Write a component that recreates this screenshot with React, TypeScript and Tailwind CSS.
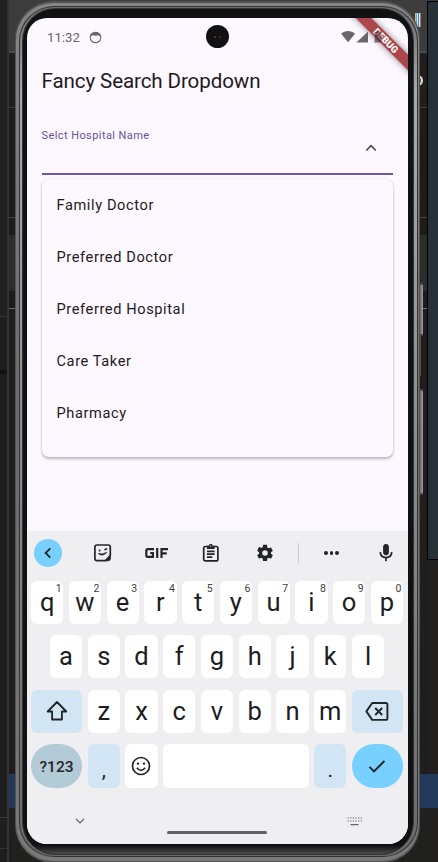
import React from "react";

const options = ["Family Doctor", "Preferred Doctor", "Preferred Hospital", "Care Taker", "Pharmacy"];
const topRow = "qwertyuiop".split("");
const homeRow = "asdfghjkl".split("");
const bottomRow = "zxcvbnm".split("");

function Key({ letter, hint }: { letter: string; hint?: string }) {
  return (
    <div className="relative flex h-[43px] w-[32.25px] shrink-0 items-center justify-center rounded-[6px] bg-white text-[25.5px] leading-none text-[#1d1d1f]">
      <span>{letter}</span>
      {hint && <span className="absolute right-[1.5px] top-[3px] text-[10.5px] leading-none text-[#3c3d40]">{hint}</span>}
    </div>
  );
}

function Backdrop() {
  return (
    <div className="absolute inset-0 flex bg-[#1d1c1a]">
      <div className="flex w-[7px] flex-col bg-[#1e1e1e]">
        <div className="h-[317px] border-b border-[#393939] bg-[#212121]" />
        <div className="h-[53px]" />
        <div className="h-[4px] bg-[#121212]" />
        <div className="h-[444px] border-b border-[#3a3a3a]" />
        <div className="h-[31px] border-b border-[#333333]" />
      </div>
      <div className="w-[2px] bg-[#343434]" />
      <div className="flex flex-1 flex-col">
        <div className="h-[53px] border-b-2 border-[#4a4a4a] bg-[#3c3c3c]" />
        <div className="h-[55px] border-b border-[#3d3d3b] bg-[#201f1d]" />
        <div className="h-[110px] border-b border-[#444444]" />
        <div className="h-[17px]" />
        <div className="h-[56px] bg-[#2d2d2b]" />
        <div className="h-[18px] border-b border-[#6a6a6a]" />
        <div className="h-[465px] bg-[#1f1e1c]" />
        <div className="h-[34px] bg-[#22395a]" />
        <div className="flex-1 bg-[#20201e]" />
      </div>
      <div className="flex w-[11px] flex-col">
        <div className="h-px bg-[#3c3c3c]" />
        <div className="h-[559px] border-y border-l border-black bg-[#263138]" />
        <div className="h-[214px] bg-[#21201e]" />
        <div className="h-[34px] bg-[#22395a]" />
        <div className="flex-1 bg-[#21201e]" />
      </div>
      <div className="absolute left-[415px] top-[13px] flex h-[14px]">
        <div className="w-px bg-[#d9b46f]" />
        <div className="w-px bg-[#5da5d6]" />
        <div className="w-px bg-[#d5e4ee]" />
        <div className="w-px bg-[#4b86b4]" />
        <div className="w-px bg-[#d5e4ee]" />
        <div className="w-px bg-[#c46e5a]" />
      </div>
      <div className="absolute left-[412px] top-[75px] h-[11px] w-[11px] rounded-full border-2 border-[#e9ddc9] bg-[#1c5d9e]" />
      <div className="absolute left-[419px] top-[283px] h-[53px] w-[4px] rounded-r-[1px] border-y-2 border-[#4a4a4a] bg-gradient-to-r from-[#555555] to-[#a0a0a0]" />
      <div className="absolute left-[419px] top-[336px] h-[40px] w-[2px] bg-[#4c4c4c]" />
      <div className="absolute left-[419px] top-[389px] h-[106px] w-[4px] rounded-r-[1px] border-y-2 border-[#4a4a4a] bg-gradient-to-r from-[#555555] to-[#a0a0a0]" />
    </div>
  );
}

function StatusBar() {
  return (
    <div className="relative z-10 flex h-[38px] shrink-0 items-center pl-[20px] pr-[25px] text-[#6a676c]">
      <span className="w-[33px] pt-px text-[13.2px] leading-none">11:32</span>
      <svg className="ml-[9px] h-[13px] w-[13px]" viewBox="0 0 13 13">
        <circle cx="6.5" cy="6.5" r="5.3" fill="none" stroke="currentColor" strokeWidth="1.1" />
        <path d="M1.3 5.2C2.6 5.2 3.2 4.7 3.6 4.2C5.2 4.8 7.8 4.8 9.4 4.2C9.8 4.7 10.4 5.2 11.7 5.2C10.9 2.2 8.8 1 6.5 1S2.1 2.2 1.3 5.2Z" fill="currentColor" />
      </svg>
      <div className="absolute left-[179px] top-[7px] flex h-[23px] w-[23px] items-center justify-center gap-[3px] rounded-full bg-[#111012]">
        <i className="h-[2px] w-[2px] rounded-full bg-[#4b4335]" />
        <i className="h-[2px] w-[2px] rounded-full bg-[#6b2b30]" />
      </div>
      <svg className="ml-auto h-[14px] w-[42px]" viewBox="0 0 42 14" fill="currentColor">
        <path d="M.2 3.7C4.1.2 10.1.2 14 3.7L7.1 12.2Z" />
        <path d="M27 1.4V12.6H15.4Z" />
        <path d="M33.6 2H35.6V.8H38.4V2H40.4V12.5H33.6Z" fill="#3d2226" fillOpacity=".62" />
      </svg>
    </div>
  );
}

function Keyboard() {
  return (
    <section className="flex h-[313px] shrink-0 flex-col bg-[#efeff1] text-[#222427]">
      <div className="flex h-[50px] shrink-0 items-center pl-[7px]">
        <div className="-mt-[6px] flex h-[28px] w-[28px] items-center justify-center rounded-full bg-[#77d0ff]">
          <svg className="h-[12px] w-[12px]" viewBox="0 0 12 12"><path d="M8.3 1.3L3.6 6L8.3 10.7" fill="none" stroke="currentColor" strokeWidth="1.8" /></svg>
        </div>
        <svg className="-mt-[6px] ml-[30.5px] h-[20px] w-[20px]" viewBox="0 0 20 20" fill="none" stroke="currentColor" strokeWidth="1.7">
          <path d="M4 2H15.2Q17.3 2 17.3 4.1V12.5L12.5 17.7H4Q1.9 17.7 1.9 15.6V4.1Q1.9 2 4 2Z" />
          <path d="M17.3 12.5V15.7Q17.3 17.7 15.3 17.7H12.5Z" fill="currentColor" strokeWidth="1" />
          <path d="M5.3 10.5Q9.8 14.2 13.8 9.3Q9.5 12 5.3 10.5Z" fill="currentColor" strokeWidth=".8" />
          <path d="M11.4 6.8L14.2 5.8" />
          <circle cx="6.6" cy="7.5" r="1" fill="currentColor" stroke="none" />
        </svg>
        <svg className="-mt-[6px] ml-[31.5px] h-[12px] w-[25px]" viewBox="0 0 25 12" fill="none" stroke="currentColor" strokeWidth="2.2">
          <path d="M10 2.1H4Q2.3 2.1 2.3 3.8V8.2Q2.3 9.9 4 9.9H8.9V6H6.2M13.2 1V11M17.5 11V2.1H24M17.5 6.3H22.8" />
        </svg>
        <svg className="-mt-[7px] ml-[32px] h-[20px] w-[20px]" viewBox="0 0 20 20" fill="none" stroke="currentColor" strokeWidth="1.7">
          <rect x="2.7" y="3.5" width="14.2" height="14.4" rx="1.7" />
          <path d="M6 2.7H8Q8.1.8 9.8.8T11.6 2.7H13.6V6H6Z" fill="currentColor" stroke="none" />
          <path d="M6 8.3H13.6M6 11.2H13.6M6 14.1H11.3" />
          <circle cx="9.8" cy="3.1" r=".7" fill="#efeff1" stroke="none" />
        </svg>
        <svg className="-mt-[6px] ml-[34px] h-[20px] w-[20px]" viewBox="0 0 24 24" fill="currentColor">
          <path d="M19.14 12.94c.04-.3.06-.61.06-.94s-.02-.64-.07-.94l2.03-1.58a.49.49 0 0 0 .12-.61l-1.92-3.32a.49.49 0 0 0-.59-.22l-2.39.96a7 7 0 0 0-1.62-.94l-.36-2.54A.48.48 0 0 0 13.92 2h-3.84a.48.48 0 0 0-.47.41l-.36 2.54c-.59.24-1.13.57-1.62.94l-2.39-.96a.49.49 0 0 0-.59.22L2.74 8.87a.49.49 0 0 0 .12.61l2.03 1.58c-.05.3-.09.63-.09.94s.02.64.07.94l-2.03 1.58a.49.49 0 0 0-.12.61l1.92 3.32c.12.22.37.29.59.22l2.39-.96c.5.38 1.03.7 1.62.94l.36 2.54c.05.24.24.41.48.41h3.84c.24 0 .44-.17.47-.41l.36-2.54c.59-.24 1.13-.56 1.62-.94l2.39.96c.22.08.47 0 .59-.22l1.92-3.32a.49.49 0 0 0-.12-.61ZM12 15.3A3.3 3.3 0 1 1 12 8.7a3.3 3.3 0 0 1 0 6.6Z" />
        </svg>
        <div className="-mt-[6px] ml-[23px] h-[20px] w-px bg-[#c9cacc]" />
        <div className="-mt-[6px] ml-[25px] flex w-[15px] justify-between">
          <i className="h-[3.6px] w-[3.6px] rounded-full bg-[#242528]" />
          <i className="h-[3.6px] w-[3.6px] rounded-full bg-[#242528]" />
          <i className="h-[3.6px] w-[3.6px] rounded-full bg-[#242528]" />
        </div>
        <svg className="-mt-[6px] ml-[37px] h-[20px] w-[20px]" viewBox="0 0 20 20" fill="none" stroke="currentColor" strokeWidth="1.7">
          <rect x="7.5" y="1.3" width="5" height="10.6" rx="2.5" fill="currentColor" stroke="currentColor" strokeWidth=".8" />
          <path d="M4.2 9.2Q4.7 14.6 10 14.6T15.8 9.2M10 14.6V18.2" />
        </svg>
      </div>

      <div className="flex flex-col gap-[11.4px] px-[4px]">
        <div className="flex gap-[5.5px]">
          {topRow.map((l, i) => <Key key={l} letter={l} hint={String((i + 1) % 10)} />)}
        </div>
        <div className="flex justify-center gap-[5.5px] pr-[1px]">
          {homeRow.map((l) => <Key key={l} letter={l} />)}
        </div>
        <div className="flex gap-[5.5px]">
          <div className="flex h-[43px] w-[51.1px] items-center justify-center rounded-[6px] bg-[#d2e5f4]">
            <svg className="h-[22px] w-[22px]" viewBox="0 0 22 22"><path d="M11 2L20.3 11.5H15.9V19.5H6.1V11.5H1.7Z" fill="none" stroke="currentColor" strokeWidth="1.8" strokeLinejoin="round" /></svg>
          </div>
          {bottomRow.map((l) => <Key key={l} letter={l} />)}
          <div className="flex h-[43px] w-[51.1px] items-center justify-center rounded-[6px] bg-[#d2e5f4]">
            <svg className="h-[22px] w-[24px]" viewBox="0 0 24 22" fill="none" stroke="currentColor" strokeWidth="1.9">
              <path d="M7.2 3H20.8Q22.4 3 22.4 4.6V18.3Q22.4 19.9 20.8 19.9H7.2L1.4 11.4Z" strokeLinejoin="round" />
              <path d="M10.2 8L17.2 15M17.2 8L10.2 15" />
            </svg>
          </div>
        </div>
        <div className="flex gap-[5.5px]">
          <div className="flex h-[44px] w-[51.1px] items-center justify-center rounded-full bg-[#b3cad7] pt-[3px] text-[15.5px] font-medium leading-none">?123</div>
          <div className="flex h-[44px] w-[32.25px] items-end justify-center rounded-[6px] bg-[#d2e5f4] pb-[7px] text-[21px] leading-none">,</div>
          <div className="flex h-[44px] w-[32.25px] items-center justify-center rounded-[6px] bg-white">
            <svg className="h-[20px] w-[20px]" viewBox="0 0 20 20" fill="none" stroke="currentColor" strokeWidth="1.7">
              <circle cx="10" cy="10" r="8.5" /><path d="M5.8 11.8Q10 16.8 14.2 11.8" />
              <circle cx="7" cy="7.6" r="1.2" fill="currentColor" stroke="none" /><circle cx="13" cy="7.6" r="1.2" fill="currentColor" stroke="none" />
            </svg>
          </div>
          <div className="h-[44px] w-[145.5px] rounded-[6px] bg-white" />
          <div className="flex h-[44px] w-[32.25px] items-end justify-center rounded-[6px] bg-[#d2e5f4] pb-[7px] text-[21px] leading-none">.</div>
          <div className="flex h-[44px] w-[51.1px] items-center justify-center rounded-full bg-[#77d0ff]">
            <svg className="h-[16px] w-[18px]" viewBox="0 0 18 16"><path d="M1.5 8.9L6 13.4L16.5 2.9" fill="none" stroke="currentColor" strokeWidth="2" /></svg>
          </div>
        </div>
      </div>

      <div className="flex flex-1 justify-between px-[48px] text-[#646568]">
        <svg className="mt-[28px] h-[10px] w-[10px]" viewBox="0 0 10 10"><path d="M1 3L5 7L9 3" fill="none" stroke="currentColor" strokeWidth="1.2" /></svg>
        <div className="ml-[2px] mt-[43px] h-[3px] w-[100px] rounded-full bg-[#606163]" />
        <svg className="-mr-[2px] mt-[28px] h-[11px] w-[15px]" viewBox="0 0 15 11" fill="none" stroke="currentColor" strokeWidth="1.2">
          <path d="M.5 2H15M.5 5H15" strokeDasharray="1.3 1.35" /><path d="M3.5 8.7H11.5" />
        </svg>
      </div>
    </section>
  );
}

export default function App() {
  return (
    <div className="relative h-[862px] w-[438px] overflow-hidden font-['Roboto','Noto_Sans',sans-serif]">
      <Backdrop />
      <div className="relative ml-[15px] mt-px h-[862px] w-[405px] rounded-[38px] bg-[#535353] pb-[2px] pl-px pr-px pt-[2px]">
        <div className="h-full rounded-[37px] bg-linear-to-b from-[#858585] via-[#6b6b6b] to-[#797979] pb-[4px] pl-[3px] pr-px pt-[3px]">
          <div className="h-full rounded-[35px] bg-[#343434] pb-px pl-px pr-px pt-px">
            <div className="h-full rounded-[34px] bg-linear-to-b from-[#6a6a6a] via-[#a9a9a9] via-10% to-[#6a6a6a] pb-px pl-[2px] pr-[3px] pt-px">
              <div className="h-full rounded-[33px] bg-[#333333] pb-px pl-px pr-px pt-px">
                <div className="h-full rounded-[32px] bg-linear-to-b from-[#101112] from-[99%] to-[#4c4c4c] pb-[10px] pl-[4px] pr-[5px] pt-[9px]">
                  <main className="relative flex h-[826px] w-[381px] flex-col overflow-hidden rounded-[20px] bg-[#fdf7ff]">
                    <StatusBar />
                    <div className="flex flex-1 flex-col px-[14.5px]">
                      <h1 className="mt-[13px] h-[24px] whitespace-nowrap text-[20.6px] leading-[25px] tracking-[-0.12px] text-[#1e1b20]">Fancy Search Dropdown</h1>
                      <div className="mt-[30px] flex h-[52px] w-[351px] border-b-2 border-[#6b56a7]">
                        <span className="mt-[6px] text-[11px] leading-[14px] tracking-[.42px] text-[#6850a4]">Selct Hospital Name</span>
                        <svg className="ml-auto mr-[15.5px] mt-[19px] h-[12px] w-[12px]" viewBox="0 0 12 12"><path d="M1.2 8.5L6 3.7L10.8 8.5" fill="none" stroke="#49454e" strokeWidth="1.6" /></svg>
                      </div>
                      <ul className="mt-[4px] h-[278px] w-[351px] rounded-[7px] bg-[#fdf7ff] shadow-[0_2px_3px_rgba(0,0,0,.25),0_0_2px_rgba(0,0,0,.1)]">
                        {options.map((item) => <li key={item} className="flex h-[52px] items-center pl-[15px] text-[14.6px] leading-none tracking-[.6px] text-[#1e1b20]">{item}</li>)}
                      </ul>
                    </div>
                    <Keyboard />
                    <div className="absolute -right-[38px] top-[17px] flex h-[11px] w-[120px] rotate-45 items-center justify-center bg-[#ac464a] text-[9.5px] font-black leading-none text-white shadow-[0_0_6px_rgba(0,0,0,.5)]">DEBUG</div>
                  </main>
                </div>
              </div>
            </div>
          </div>
        </div>
      </div>
    </div>
  );
}
